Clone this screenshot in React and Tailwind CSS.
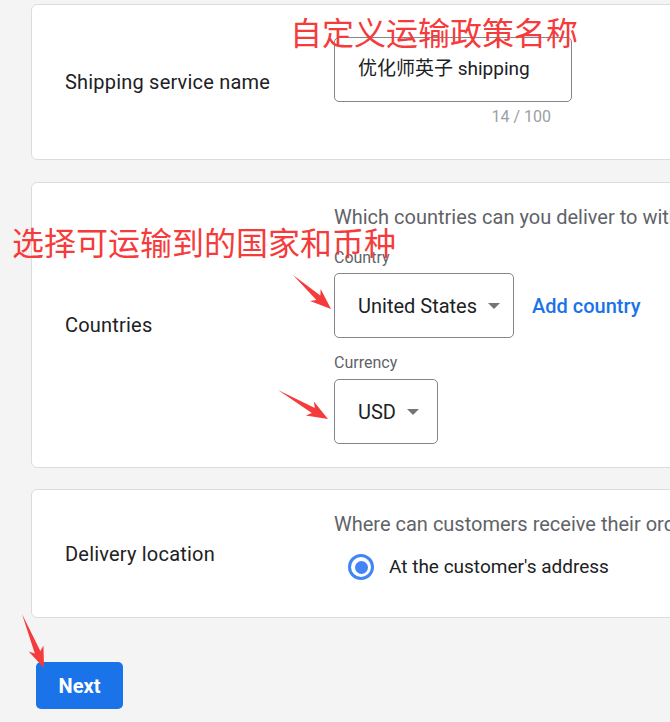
const FONT = "font-['Roboto','Noto_Sans_CJK_SC',sans-serif]";

// red annotation arrow from tail (x1,y1) to tip (x2,y2)
function arrowPoints(x1, y1, x2, y2, head = 17, hw = 8, sw = 3) {
  const dx = x2 - x1, dy = y2 - y1;
  const len = Math.hypot(dx, dy);
  const ux = dx / len, uy = dy / len;
  const nx = -uy, ny = ux;
  const bx = x2 - ux * head, by = y2 - uy * head;
  const back = 4;
  const pts = [
    [x1, y1],
    [bx + nx * sw, by + ny * sw],
    [bx - ux * back + nx * hw, by - uy * back + ny * hw],
    [x2, y2],
    [bx - ux * back - nx * hw, by - uy * back - ny * hw],
    [bx - nx * sw, by - ny * sw],
  ];
  return pts.map(p => p.join(",")).join(" ");
}

function Caret() {
  return (
    <svg width="12" height="6" viewBox="0 0 12 6" className="shrink-0">
      <path d="M0 0h12L6 6z" fill="#757575" />
    </svg>
  );
}

function Select({ value, width }) {
  return (
    <div className={`${width} h-[65px] shrink-0 border border-[#80868b] rounded-[5px] flex items-center pl-[23px] gap-[11px] text-[20px] text-[#202124]`}>
      <span>{value}</span>
      <Caret />
    </div>
  );
}

export default function App() {
  return (
    <div className={`relative w-[670px] h-[722px] overflow-hidden bg-[#f4f4f4] ${FONT}`}>
      <div className="pt-[4px]">
        {/* shipping service name */}
        <div className="ml-[31px] w-[700px] h-[156px] bg-white border border-[#dadce0] rounded-[6px] flex">
          <div className="w-[302px] shrink-0 pl-[33px] self-center text-[20px] tracking-[0.2px] text-[#202124]">Shipping service name</div>
          <div className="pt-[32px]">
            <div className="w-[238px] h-[65px] border border-[#80868b] rounded-[5px] flex items-center pl-[23px] text-[19px] text-[#202124]">
              优化师英子 shipping
            </div>
            <div className="w-[217px] mt-[5px] text-right text-[16px] leading-[20px] text-[#9aa0a6]">14 / 100</div>
          </div>
        </div>

        {/* countries */}
        <div className="mt-[22px] ml-[31px] w-[700px] h-[286px] bg-white border border-[#dadce0] rounded-[6px] flex">
          <div className="w-[302px] shrink-0 pl-[33px] self-center text-[20px] tracking-[0.2px] text-[#202124]">Countries</div>
          <div className="pt-[21px] min-w-0">
            <div className="text-[20px] leading-[26px] text-[#5f6368] whitespace-nowrap">Which countries can you deliver to without extra fees?</div>
            <div className="mt-[18px] text-[16px] leading-[20px] text-[#5f6368]">Country</div>
            <div className="mt-[5px] flex items-center gap-[18px]">
              <Select value="United States" width="w-[180px]" />
              <span className="text-[20px] font-medium text-[#1a73e8] whitespace-nowrap">Add country</span>
            </div>
            <div className="mt-[15px] text-[16px] leading-[20px] text-[#5f6368]">Currency</div>
            <div className="mt-[6px]">
              <Select value="USD" width="w-[104px]" />
            </div>
          </div>
        </div>

        {/* delivery location */}
        <div className="mt-[21px] ml-[31px] w-[700px] h-[129px] bg-white border border-[#dadce0] rounded-[6px] flex">
          <div className="w-[302px] shrink-0 pl-[33px] self-center text-[20px] tracking-[0.2px] text-[#202124]">Delivery location</div>
          <div className="pt-[21px] min-w-0">
            <div className="text-[20px] leading-[26px] text-[#5f6368] whitespace-nowrap">Where can customers receive their orders?</div>
            <div className="mt-[17px] flex items-center pl-[14px] gap-[15px]">
              <div className="w-[26px] h-[26px] rounded-full border-[3px] border-[#4285f4] flex items-center justify-center">
                <div className="w-[13px] h-[13px] rounded-full bg-[#4285f4]" />
              </div>
              <span className="text-[19px] leading-[24px] text-[#202124]">At the customer's address</span>
            </div>
          </div>
        </div>

        <button className="mt-[44px] ml-[36px] w-[87px] h-[47px] rounded-[5px] bg-[#1a73e8] text-white text-[20px] font-bold">Next</button>
      </div>

      {/* annotations */}
      <div className="absolute left-[290px] top-[11px] text-[32px] leading-[40px] text-[#f53b3b] font-['Noto_Sans_CJK_SC',sans-serif] whitespace-nowrap">自定义运输政策名称</div>
      <div className="absolute left-[12px] top-[221px] text-[32px] leading-[40px] text-[#f53b3b] font-['Noto_Sans_CJK_SC',sans-serif] whitespace-nowrap">选择可运输到的国家和币种</div>
      <svg className="absolute inset-0 pointer-events-none" width="670" height="722">
        <polygon points={arrowPoints(293, 275, 331, 309)} fill="#f53b3b" />
        <polygon points={arrowPoints(278, 390, 328, 419)} fill="#f53b3b" />
        <polygon points={arrowPoints(22, 614, 44, 668)} fill="#f53b3b" />
      </svg>
    </div>
  );
}
